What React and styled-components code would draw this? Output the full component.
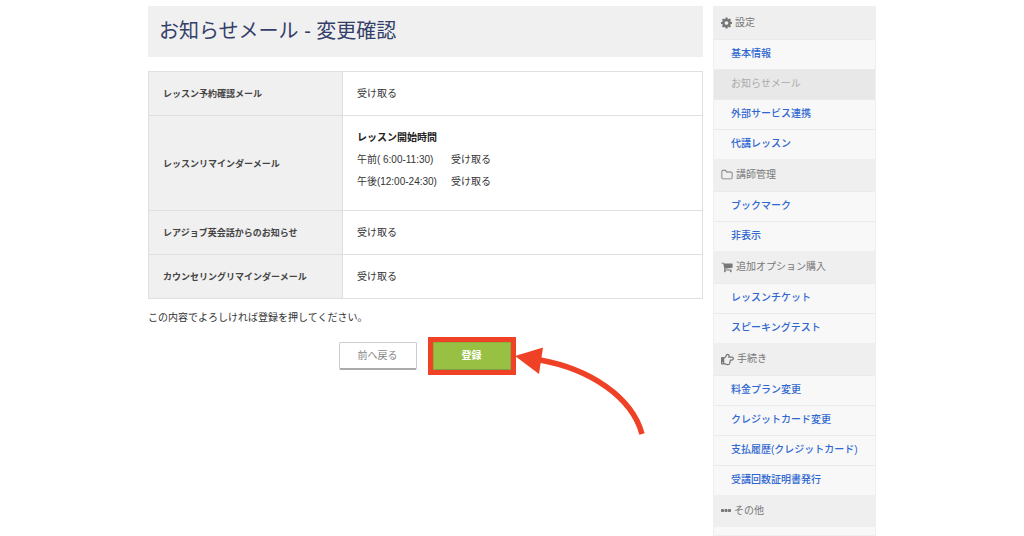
import React from 'react';
import styled, { createGlobalStyle } from 'styled-components';
import { FaRegHandPointRight } from 'react-icons/fa';

const GlobalStyle = createGlobalStyle`
  * { box-sizing: border-box; }
  body {
    margin: 0;
    background: #fff;
    color: #333;
    font-family: "Liberation Sans", "Noto Sans CJK JP", sans-serif;
    font-size: 10px;
    line-height: 22px;
  }
`;

const Page = styled.div`
  display: flex;
  align-items: flex-start;
  gap: 10px;
  max-width: 728px;
  margin: 0 auto;
  padding-top: 6px;
`;

const Main = styled.main`
  flex: 1;
  min-width: 0;
`;

const Title = styled.h1`
  margin: 0 0 14px;
  padding: 10px 11px 11px;
  background: #f0f0f0;
  color: #343f69;
  font-size: 20px;
  font-weight: 400;
  line-height: 30px;
`;

const Table = styled.table`
  width: 100%;
  border-collapse: collapse;
  border: 1px solid #dfdfdf;
`;

const HeadCell = styled.th`
  width: 35%;
  padding: 11px 14px 10px;
  border: 1px solid #dfdfdf;
  background: #f0f0f0;
  color: #444;
  font-size: 9px;
  font-weight: 700;
  text-align: left;
`;

const Cell = styled.td`
  padding: 11px 14px 10px;
  border: 1px solid #dfdfdf;
`;

const TimeList = styled.dl`
  display: grid;
  grid-template-columns: 80px auto;
  column-gap: 14px;
  margin: 0 0 7px;
`;

const TimeHeading = styled.strong`
  display: block;
  color: #222;
`;

const TimeLabel = styled.dt`
  white-space: pre;
`;

const TimeValue = styled.dd`
  margin: 0;
`;

const Note = styled.p`
  margin: 8px 0 13px;
`;

const Actions = styled.form`
  display: flex;
  justify-content: center;
  gap: 16px;
  padding-right: 2px;
`;

const Button = styled.button`
  width: 78px;
  height: 28px;
  padding: 0;
  border: 1px solid ${(p) => (p.$primary ? '#8ab03c' : '#ccc')};
  border-bottom: ${(p) => (p.$primary ? '1px solid #809f42' : '2px solid #aaa')};
  border-radius: ${(p) => (p.$primary ? '0' : '2px')};
  background: ${(p) => (p.$primary ? '#98c144' : '#fff')};
  color: ${(p) => (p.$primary ? '#fff' : '#888')};
  font: inherit;
  font-weight: ${(p) => (p.$primary ? 700 : 400)};
  cursor: pointer;
`;

const Highlight = styled.div`
  position: relative;
  display: flex;
  outline: 5px solid #ef4126;
`;

const Arrow = styled.svg`
  position: absolute;
  top: 0;
  left: 100%;
  width: 140px;
  height: 100px;
  pointer-events: none;
`;

const Sidebar = styled.nav`
  width: 163px;
  flex: none;
  border: 1px solid #efefef;
  background: #f8f8f8;
`;

const GroupTitle = styled.h2`
  display: flex;
  align-items: center;
  gap: 3px;
  height: 32px;
  margin: 0;
  padding: 0 7px;
  background: #efefef;
  color: #777;
  font-size: 10px;
  font-weight: 400;

  svg { flex: none; }
`;

const GroupList = styled.ul`
  min-height: 8px;
  margin: 0;
  padding: 0;
  list-style: none;
`;

const MenuLink = styled.a`
  display: block;
  height: 30px;
  padding: 3px 17px;
  border-top: 1px solid #ebebeb;
  background: ${(p) => (p.$current ? '#e8e8e8' : '#f8f8f8')};
  color: ${(p) => (p.$current ? '#aaa' : '#2f67d0')};
  font-weight: ${(p) => (p.$current ? 400 : 500)};
  text-decoration: none;
`;

const Glyph = ({ d, width = 12, box = '64 0 1664 1792' }) => (
  <svg width={width} height="12" viewBox={box} fill="currentColor" aria-hidden="true">
    <path d={d} />
  </svg>
);

const cog = 'M1152 896q0-106-75-181t-181-75-181 75-75 181 75 181 181 75 181-75 75-181zm512-109v222q0 12-8 23t-20 13l-185 28q-19 54-39 91 35 50 107 138 10 12 10 25t-9 23q-27 37-99 108t-94 71q-12 0-26-9l-138-108q-44 23-91 38-16 136-29 186-7 28-36 28h-222q-14 0-24.500-8.500t-11.500-21.500l-28-184q-49-16-90-37l-141 107q-10 9-25 9-14 0-25-11-126-114-165-168-7-10-7-23 0-12 8-23 15-21 51-66.500t54-70.500q-27-50-41-99l-183-27q-13-2-21-12.500t-8-23.500v-222q0-12 8-23t19-13l186-28q14-46 39-92-40-57-107-138-10-12-10-24 0-10 9-23 26-36 98.500-107.500t94.500-71.500q13 0 26 10l138 107q44-23 91-38 16-136 29-186 7-28 36-28h222q14 0 24.500 8.500t11.500 21.500l28 184q49 16 90 37l142-107q9-9 24-9 13 0 25 10 129 119 165 170 7 8 7 22 0 12-8 23-15 21-51 66.500t-54 70.500q26 50 41 98l183 28q13 2 21 12.500t8 23.500z';
const folder = 'M1600 1312v-704q0-40-28-68t-68-28h-704q-40 0-68-28t-28-68v-64q0-40-28-68t-68-28h-320q-40 0-68 28t-28 68v960q0 40 28 68t68 28h1216q40 0 68-28t28-68zm128-704v704q0 92-66 158t-158 66h-1216q-92 0-158-66t-66-158v-960q0-92 66-158t158-66h320q92 0 158 66t66 158v32h672q92 0 158 66t66 158z';
const cart = 'M704 1536q0 52-38 90t-90 38-90-38-38-90 38-90 90-38 90 38 38 90zm896 0q0 52-38 90t-90 38-90-38-38-90 38-90 90-38 90 38 38 90zm128-1088v512q0 24-16.500 42.500t-40.500 21.500l-1044 122q13 60 13 70 0 16-24 64h920q26 0 45 19t19 45-19 45-45 19h-1024q-26 0-45-19t-19-45q0-11 8-31.500t16-36 21.500-40 15.500-29.500l-177-823h-204q-26 0-45-19t-19-45 19-45 45-19h256q16 0 28.500 6.500t19.500 15.500 13 24.500 8 26 5.500 29.500 4.500 26h1201q26 0 45 19t19 45z';

const Dots = () => (
  <svg width="10" height="12" viewBox="0 0 10 12" fill="currentColor" aria-hidden="true">
    <rect x="0" y="4" width="3" height="3" rx="0.700" />
    <rect x="3.500" y="4" width="3" height="3" rx="0.700" />
    <rect x="7" y="4" width="3" height="3" rx="0.700" />
  </svg>
);

const groups = [
  {
    title: '設定',
    icon: <Glyph d={cog} width={11} box="128 128 1536 1536" />,
    items: ['基本情報', 'お知らせメール', '外部サービス連携', '代講レッスン'],
  },
  { title: '講師管理', icon: <Glyph d={folder} />, items: ['ブックマーク', '非表示'] },
  { title: '追加オプション購入', icon: <Glyph d={cart} />, items: ['レッスンチケット', 'スピーキングテスト'] },
  {
    title: '手続き',
    icon: <FaRegHandPointRight size={13} aria-hidden="true" />,
    items: ['料金プラン変更', 'クレジットカード変更', '支払履歴(クレジットカード)', '受講回数証明書発行'],
  },
  { title: 'その他', icon: <Dots />, items: [] },
];

export default function App() {
  return (
    <>
      <GlobalStyle />
      <Page lang="ja">
        <Main>
          <Title>お知らせメール - 変更確認</Title>
          <Table>
            <tbody>
              <tr>
                <HeadCell scope="row">レッスン予約確認メール</HeadCell>
                <Cell>受け取る</Cell>
              </tr>
              <tr>
                <HeadCell scope="row">レッスンリマインダーメール</HeadCell>
                <Cell>
                  <TimeHeading>レッスン開始時間</TimeHeading>
                  <TimeList>
                    <TimeLabel>午前( 6:00-11:30)</TimeLabel>
                    <TimeValue>受け取る</TimeValue>
                    <TimeLabel>午後(12:00-24:30)</TimeLabel>
                    <TimeValue>受け取る</TimeValue>
                  </TimeList>
                </Cell>
              </tr>
              <tr>
                <HeadCell scope="row">レアジョブ英会話からのお知らせ</HeadCell>
                <Cell>受け取る</Cell>
              </tr>
              <tr>
                <HeadCell scope="row">カウンセリングリマインダーメール</HeadCell>
                <Cell>受け取る</Cell>
              </tr>
            </tbody>
          </Table>
          <Note>この内容でよろしければ登録を押してください。</Note>
          <Actions onSubmit={(e) => e.preventDefault()}>
            <Button type="button">前へ戻る</Button>
            <Highlight>
              <Button type="submit" $primary>登録</Button>
              <Arrow viewBox="0 0 140 100" aria-hidden="true">
                <path d="M29 18C79 27 121 55 131 92" fill="none" stroke="#ef4126" strokeWidth="5.500" />
                <path d="M4 14L32 5.500L28 32Z" fill="#ef4126" />
              </Arrow>
            </Highlight>
          </Actions>
        </Main>
        <Sidebar aria-label="メニュー">
          {groups.map((group) => (
            <section key={group.title}>
              <GroupTitle>
                {group.icon}
                {group.title}
              </GroupTitle>
              <GroupList>
                {group.items.map((item) => {
                  const current = item === 'お知らせメール';
                  return (
                    <li key={item}>
                      <MenuLink href="#" $current={current} aria-current={current ? 'page' : undefined}>
                        {item}
                      </MenuLink>
                    </li>
                  );
                })}
              </GroupList>
            </section>
          ))}
        </Sidebar>
      </Page>
    </>
  );
}
